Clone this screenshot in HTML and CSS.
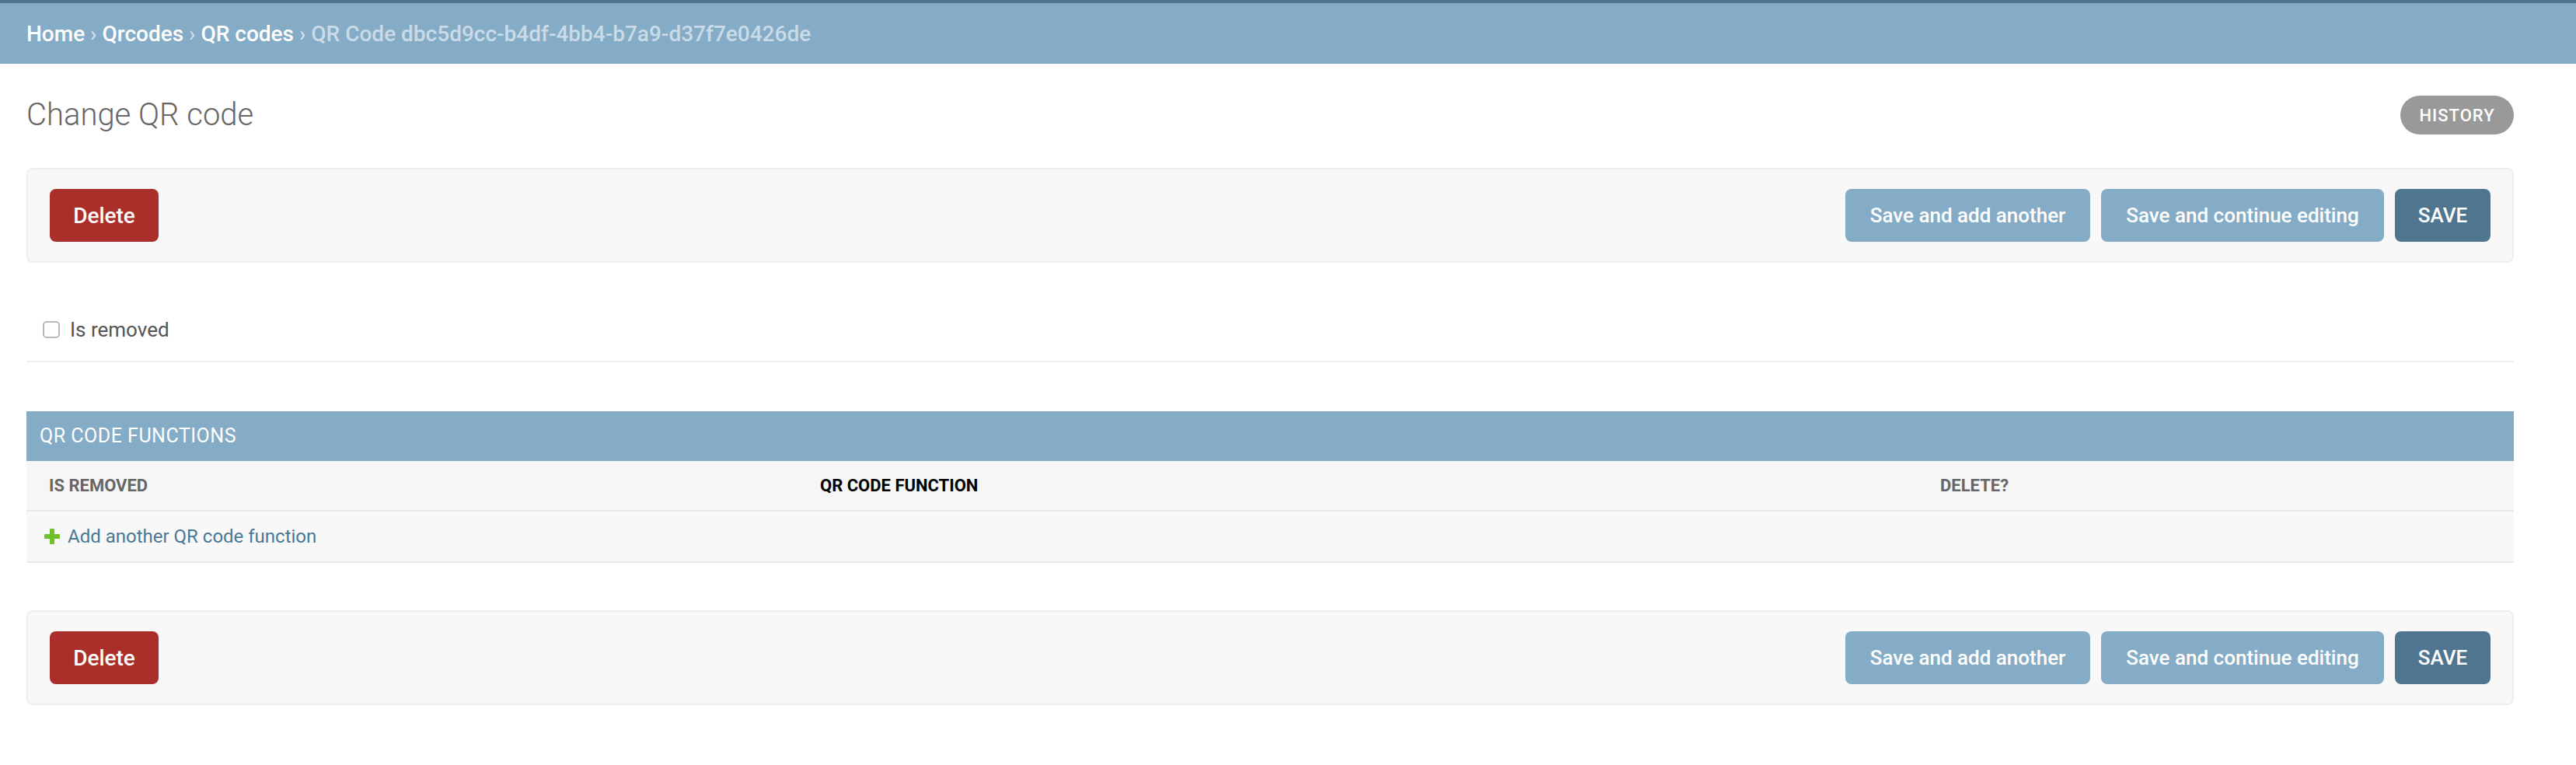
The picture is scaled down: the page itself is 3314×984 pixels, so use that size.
FILE: index.html
```html
<!DOCTYPE html>
<html lang="en">
<head>
<meta charset="utf-8">
<title>Change QR code</title>
<link rel="stylesheet" href="styles.css">
</head>
<body>
<div class="header-strip"></div>
<nav class="breadcrumbs">
  <div class="crumbs"><a href="#">Home</a> <span class="sep">›</span> <a href="#">Qrcodes</a> <span class="sep">›</span> <a href="#">QR codes</a> <span class="sep">›</span> <span class="current">QR Code dbc5d9cc-b4df-4bb4-b7a9-d37f7e0426de</span></div>
</nav>
<main class="content">
  <div class="title-row">
    <h1>Change QR code</h1>
    <a class="history" href="#">History</a>
  </div>

  <div class="submit-row">
    <a class="btn delete" href="#">Delete</a>
    <div class="save-group">
      <button class="btn light">Save and add another</button>
      <button class="btn light">Save and continue editing</button>
      <button class="btn default">Save</button>
    </div>
  </div>

  <fieldset class="module">
    <div class="form-row">
      <input type="checkbox" id="is_removed" class="checkbox">
      <label for="is_removed">Is removed</label>
    </div>
  </fieldset>

  <div class="inline-group">
    <h2>QR code functions</h2>
    <div class="thead">
      <div class="th quiet">Is removed</div>
      <div class="th required">QR code function</div>
      <div class="th quiet">Delete?</div>
    </div>
    <div class="add-row">
      <span class="plus"></span>
      <a href="#">Add another QR code function</a>
    </div>
  </div>

  <div class="submit-row bottom">
    <a class="btn delete" href="#">Delete</a>
    <div class="save-group">
      <button class="btn light">Save and add another</button>
      <button class="btn light">Save and continue editing</button>
      <button class="btn default">Save</button>
    </div>
  </div>
</main>
</body>
</html>
```

FILE: styles.css
```css
* { box-sizing: border-box; }

html, body {
  margin: 0;
  padding: 0;
  background: #ffffff;
  font-family: Roboto, "Liberation Sans", sans-serif;
  color: #333;
}

.header-strip {
  height: 4px;
  background: #4e7590;
}

.breadcrumbs {
  height: 78px;
  background: #84acc6;
  padding: 0 34px;
  display: flex;
  align-items: center;
  font-size: 28px;
  color: #d4e2ec;
}
.crumbs {
  white-space: nowrap;
}
.breadcrumbs a {
  color: #ffffff;
  text-decoration: none;
  font-weight: 500;
}
.breadcrumbs .sep {
  color: #d4e2ec;
}
.breadcrumbs .current {
  color: #cadbe7;
  font-weight: 500;
}

.content {
  padding: 0 80px 0 34px;
}

.title-row {
  display: flex;
  align-items: center;
  justify-content: space-between;
  padding-top: 41px;
  padding-bottom: 43px;
  height: 134px;
}
.title-row h1 {
  margin: 0;
  font-size: 40px;
  font-weight: 300;
  color: #666;
  line-height: 50px;
}
.history {
  display: inline-flex;
  align-items: center;
  justify-content: center;
  height: 50px;
  width: 146px;
  border-radius: 25px;
  background: #999999;
  color: #fff;
  font-size: 22px;
  font-weight: 500;
  letter-spacing: 1px;
  text-transform: uppercase;
  text-decoration: none;
}

.submit-row {
  display: flex;
  align-items: center;
  justify-content: space-between;
  background: #f8f8f8;
  border: 2px solid #eeeeee;
  border-radius: 8px;
  padding: 25px 28px;
}
.submit-row.bottom {
  margin-top: 61px;
}
.save-group {
  display: flex;
  gap: 14px;
}

.btn {
  display: inline-flex;
  align-items: center;
  justify-content: center;
  height: 68px;
  padding: 0 30px;
  border: none;
  border-radius: 8px;
  font-family: Roboto, "Liberation Sans", sans-serif;
  font-size: 26px;
  font-weight: 500;
  color: #fff;
  text-decoration: none;
}
.btn.delete {
  background: #aa2f2a;
  width: 140px;
  font-size: 28px;
}
.btn.light {
  background: #84acc6;
}
.btn.light:first-child { width: 315px; }
.btn.light:nth-child(2) { width: 364px; }
.btn.default {
  background: #507590;
  text-transform: uppercase;
  width: 123px;
}

.module {
  margin: 46px 0 0 0;
  padding: 0;
  border: none;
}
.form-row {
  display: flex;
  align-items: center;
  gap: 13px;
  height: 82px;
  padding: 0 21px;
  border-bottom: 2px solid #eeeeee;
}
.checkbox {
  appearance: none;
  -webkit-appearance: none;
  margin: 0;
  width: 22px;
  height: 22px;
  border: 2px solid #b8b8b8;
  border-radius: 5px;
  background: #fff;
}
.form-row label {
  font-size: 26px;
  color: #555;
}

.inline-group {
  margin-top: 63px;
}
.inline-group h2 {
  margin: 0;
  height: 64px;
  line-height: 64px;
  padding: 0 17px;
  background: #84acc6;
  color: #fff;
  font-size: 25px;
  font-weight: 400;
  letter-spacing: 0.5px;
  text-transform: uppercase;
}
.thead {
  display: grid;
  grid-template-columns: 992px 1441px 1fr;
  height: 65px;
  align-items: center;
  background: #f6f6f6;
  border-bottom: 2px solid #eaeaea;
}
.th {
  padding-left: 29px;
  font-size: 22px;
  font-weight: 700;
  text-transform: uppercase;
}
.th.quiet { color: #666; }
.th.required { color: #000; }

.add-row {
  display: flex;
  align-items: center;
  height: 66px;
  padding-left: 23px;
  background: #f8f8f8;
  border-bottom: 2px solid #eaeaea;
  gap: 10px;
}
.plus {
  position: relative;
  width: 20px;
  height: 20px;
}
.plus::before,
.plus::after {
  content: "";
  position: absolute;
  background: #70bf2b;
  border-radius: 1px;
}
.plus::before {
  left: 7px;
  top: 0;
  width: 6px;
  height: 20px;
}
.plus::after {
  left: 0;
  top: 7px;
  width: 20px;
  height: 6px;
}
.add-row a {
  font-size: 24px;
  color: #4a7894;
  text-decoration: none;
}
```
